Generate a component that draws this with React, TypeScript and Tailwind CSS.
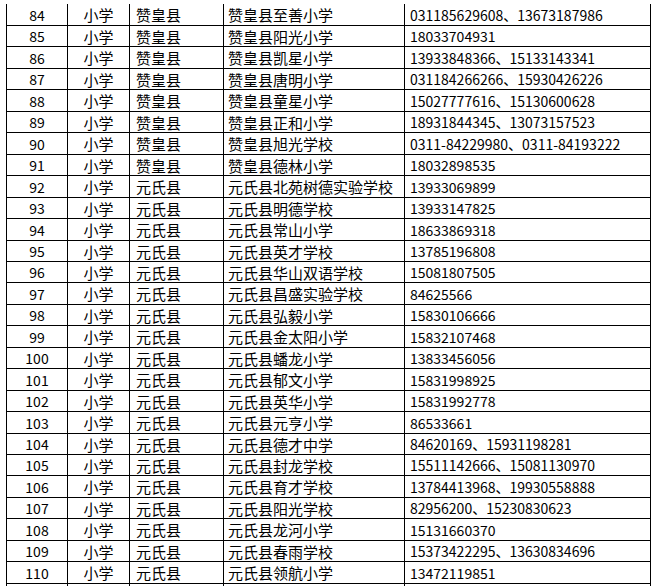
import React from 'react';

type Row = { no: number; county: string; school: string; phone: string };

const rows: Row[] = [
    { no: 84, county: '赞皇县', school: '赞皇县至善小学', phone: '031185629608、13673187986' },
    { no: 85, county: '赞皇县', school: '赞皇县阳光小学', phone: '18033704931' },
    { no: 86, county: '赞皇县', school: '赞皇县凯星小学', phone: '13933848366、15133143341' },
    { no: 87, county: '赞皇县', school: '赞皇县唐明小学', phone: '031184266266、15930426226' },
    { no: 88, county: '赞皇县', school: '赞皇县童星小学', phone: '15027777616、15130600628' },
    { no: 89, county: '赞皇县', school: '赞皇县正和小学', phone: '18931844345、13073157523' },
    { no: 90, county: '赞皇县', school: '赞皇县旭光学校', phone: '0311-84229980、0311-84193222' },
    { no: 91, county: '赞皇县', school: '赞皇县德林小学', phone: '18032898535' },
    { no: 92, county: '元氏县', school: '元氏县北苑树德实验学校', phone: '13933069899' },
    { no: 93, county: '元氏县', school: '元氏县明德学校', phone: '13933147825' },
    { no: 94, county: '元氏县', school: '元氏县常山小学', phone: '18633869318' },
    { no: 95, county: '元氏县', school: '元氏县英才学校', phone: '13785196808' },
    { no: 96, county: '元氏县', school: '元氏县华山双语学校', phone: '15081807505' },
    { no: 97, county: '元氏县', school: '元氏县昌盛实验学校', phone: '84625566' },
    { no: 98, county: '元氏县', school: '元氏县弘毅小学', phone: '15830106666' },
    { no: 99, county: '元氏县', school: '元氏县金太阳小学', phone: '15832107468' },
    { no: 100, county: '元氏县', school: '元氏县蟠龙小学', phone: '13833456056' },
    { no: 101, county: '元氏县', school: '元氏县郁文小学', phone: '15831998925' },
    { no: 102, county: '元氏县', school: '元氏县英华小学', phone: '15831992778' },
    { no: 103, county: '元氏县', school: '元氏县元亨小学', phone: '86533661' },
    { no: 104, county: '元氏县', school: '元氏县德才中学', phone: '84620169、15931198281' },
    { no: 105, county: '元氏县', school: '元氏县封龙学校', phone: '15511142666、15081130970' },
    { no: 106, county: '元氏县', school: '元氏县育才学校', phone: '13784413968、19930558888' },
    { no: 107, county: '元氏县', school: '元氏县阳光学校', phone: '82956200、15230830623' },
    { no: 108, county: '元氏县', school: '元氏县龙河小学', phone: '15131660370' },
    { no: 109, county: '元氏县', school: '元氏县春雨学校', phone: '15373422295、13630834696' },
    { no: 110, county: '元氏县', school: '元氏县领航小学', phone: '13472119851' },
];

// row heights in px (rows are about 21.45px apart in the scan)
const heights = [26, 21, 22, 21, 22, 21, 22, 21, 22, 21, 22, 21, 21, 22, 21, 22, 21, 22, 21, 22, 21, 21, 22, 21, 22, 21, 22];

const cjk = "font-['Noto_Sans_CJK_SC',sans-serif]";
const cell = 'flex items-center border-r border-black overflow-hidden whitespace-nowrap';

const TableRow = ({ row, h, first }: { row?: Row; h: number; first?: boolean }) => (
    <div
        className={`grid grid-cols-[62px_62px_94px_181px_246px] border-b border-black ${h === 26 ? 'h-[26px]' : h === 22 ? 'h-[22px]' : 'h-[21px]'} ${first ? 'pt-[4px]' : ''}`}
    >
        <div className={`${cell} border-l justify-center text-[14px]`}>{row?.no}</div>
        <div className={`${cell} justify-center text-[15px]`}>{row && '小学'}</div>
        <div className={`${cell} pl-[6px] text-[15px]`}>{row?.county}</div>
        <div className={`${cell} pl-[4px] text-[15px]`}>{row?.school}</div>
        <div className={`${cell} pl-[5px] text-[14px]`}>{row?.phone}</div>
    </div>
);

export default function App() {
    return (
        <div className={`h-[586px] w-[657px] overflow-hidden bg-white text-black leading-none ${cjk}`}>
            <div className="ml-[6px] w-[645px]">
                {rows.map((r, i) => (
                    <TableRow key={r.no} row={r} h={heights[i]} first={i === 0} />
                ))}
                <TableRow h={21} />
            </div>
        </div>
    );
}
